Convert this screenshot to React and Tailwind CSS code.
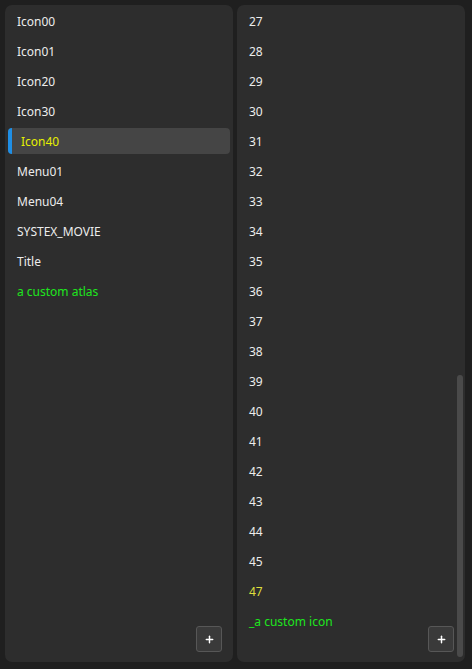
import { Plus } from 'lucide-react';

const LEFT = [
  { label: 'Icon00' },
  { label: 'Icon01' },
  { label: 'Icon20' },
  { label: 'Icon30' },
  { label: 'Icon40', selected: true },
  { label: 'Menu01' },
  { label: 'Menu04' },
  { label: 'SYSTEX_MOVIE' },
  { label: 'Title' },
  { label: 'a custom atlas', custom: true },
];

const RIGHT = [
  ...Array.from({ length: 19 }, (_, i) => ({ label: String(27 + i) })),
  { label: '47', modified: true },
  { label: '_a custom icon', custom: true },
];

function Row({ item }) {
  if (item.selected) {
    return (
      <div className="relative h-[26px] shrink-0 flex items-center pt-[2px] pl-[13px] rounded-[4px] bg-[#454545] text-[#e6f000]">
        <span className="absolute left-0 top-0 bottom-0 w-[4px] rounded-l-[4px] bg-[#1f8fe6]" />
        {item.label}
      </div>
    );
  }
  const color = item.custom ? 'text-[#1ee61e]' : item.modified ? 'text-[#dede3c]' : 'text-[#ececec]';
  return <div className={`h-[26px] shrink-0 flex items-center pt-[2px] pl-[9px] ${color}`}>{item.label}</div>;
}

function AddButton() {
  return (
    <button className="absolute right-[11px] bottom-[10px] w-[26px] h-[26px] flex items-center justify-center rounded-[3px] border border-[#575757] bg-[#3a3a3a] text-white">
      <Plus size={11} strokeWidth={3.2} />
    </button>
  );
}

function Panel({ items, scroll }) {
  return (
    <div className="relative w-[228px] h-[657px] rounded-[7px] bg-[#2d2d2d] overflow-hidden">
      <div className="flex flex-col gap-[4px] p-[3px]">
        {items.map(item => <Row key={item.label} item={item} />)}
      </div>
      {scroll && (
        <div className="absolute right-[2px] top-[370px] w-[6px] h-[282px] rounded-[3px] bg-[#4a4a4a]" />
      )}
      <AddButton />
    </div>
  );
}

export default function App() {
  return (
    <div className="w-[472px] h-[669px] bg-[#1f1f1f] flex gap-[4px] pt-[5px] pl-[5px] text-[12px] font-['Noto_Sans',sans-serif]">
      <Panel items={LEFT} />
      <Panel items={RIGHT} scroll />
    </div>
  );
}
